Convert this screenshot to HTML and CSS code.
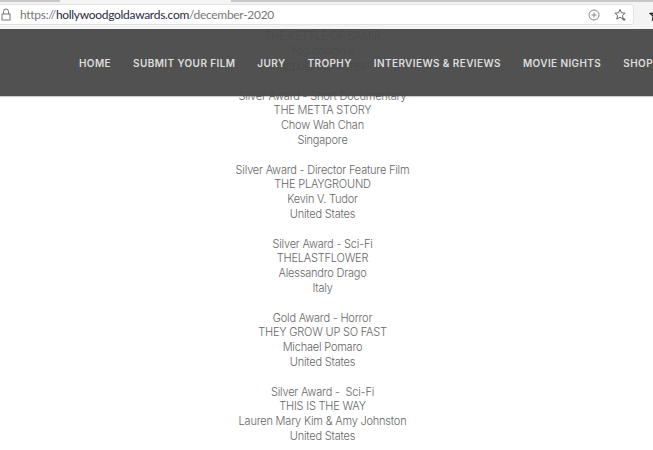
FILE: index.html
```html
<!DOCTYPE html>
<html lang="en">
<head>
<meta charset="utf-8">
<title>December 2020</title>
<link rel="stylesheet" href="styles.css">
</head>
<body>
<div class="chrome">
  <div class="tabs"><span class="tab tab-a"></span><span class="tab tab-b"></span></div>
  <div class="toolbar">
    <div class="omnibox">
      <svg class="lock" width="10" height="13" viewBox="0 0 10 13"><path d="M2.500 6V3.500a2.500 2.500 0 0 1 5 0V6" fill="none" stroke="#777"/><rect x="1" y="6" width="8" height="6" fill="none" stroke="#777"/></svg>
      <span class="url">https://<b>hollywoodgoldawards.com</b>/december-2020</span>
      <svg class="plus" width="12" height="12" viewBox="0 0 12 12"><circle cx="6" cy="6" r="5" fill="none" stroke="#888"/><path d="M6 3.500v5M3.500 6h5" stroke="#888"/></svg>
      <svg class="star" width="14" height="14" viewBox="0 0 14 14"><path d="M7 1.500l1.500 3.300 3.600.4-2.700 2.400.8 3.500L7 9.300l-3.200 1.800.8-3.500-2.700-2.400 3.600-.4z" fill="none" stroke="#666"/><path d="M11 10v3M9.500 11.500h3" stroke="#666"/></svg>
    </div>
    <svg class="star-out" width="14" height="14" viewBox="0 0 14 14"><path d="M7 1.500l1.700 3.600 3.800.5-2.800 2.600.7 3.800L7 10.100 3.600 12l.7-3.800L1.500 5.600l3.800-.5z" fill="none" stroke="#222" stroke-width="1.400"/></svg>
  </div>
</div>
<div class="page">
  <header class="nav">
    <a>HOME</a><a>SUBMIT YOUR FILM</a><a>JURY</a><a>TROPHY</a><a>INTERVIEWS &amp; REVIEWS</a><a>MOVIE NIGHTS</a><a>SHOP</a>
  </header>
  <main class="list">
    <p>THE KETTLE OF SAMIR<br>Yoo dongkuk<br>Republic of Korea</p>
    <p>Silver Award - Short Documentary<br>THE METTA STORY<br>Chow Wah Chan<br>Singapore</p>
    <p>Silver Award - Director Feature Film<br>THE PLAYGROUND<br>Kevin V. Tudor<br>United States</p>
    <p>Silver Award - Sci-Fi<br>THELASTFLOWER<br>Alessandro Drago<br>Italy</p>
    <p>Gold Award - Horror<br>THEY GROW UP SO FAST<br>Michael Pomaro<br>United States</p>
    <p>Silver Award -&nbsp; Sci-Fi<br>THIS IS THE WAY<br>Lauren Mary Kim &amp; Amy Johnston<br>United States</p>
  </main>
</div>
</body>
</html>
```
FILE: styles.css
```css
* { box-sizing: border-box; }
html, body { margin: 0; height: 100%; overflow: hidden; background: #fff; }
body { font-family: Inter, "Liberation Sans", sans-serif; width: 653px; height: 450px; }
.chrome { height: 29px; background: #f4f4f4; overflow: hidden; }
.tabs { height: 4px; display: flex; background: #f4f4f4; }
.tab { height: 2px; background: #c8c8c8; }
.tab-a { width: 60px; }
.tab-b { flex: 1; margin-left: 171px; }
.toolbar { display: flex; align-items: center; height: 21px; margin-left: -4px; }
.omnibox { width: 638px; flex: none; display: flex; align-items: center; height: 21px; margin-right: 15px; background: #fff; border: 1px solid #e2e2e2; border-radius: 3px; padding-left: 4px; }
.lock { flex: none; margin-right: 9px; }
.url { font-family: Lato, sans-serif; font-size: 12px; letter-spacing: -.3px; color: #777; flex: 1; }
.url b { font-weight: 400; color: #1f2a44; }
.plus { margin-right: 13px; }
.star { margin-right: 6px; }
.star-out { flex: none; }
.page { position: relative; }
.nav { position: absolute; top: 0; left: 0; width: 100%; height: 67px; background: rgba(72,72,72,.95); box-shadow: 0 1px 1px rgba(0,0,0,.2); display: flex; align-items: center; gap: 22px; padding-left: 79px; white-space: nowrap; }
.nav a { font-size: 10px; font-weight: 600; letter-spacing: .4px; color: #ddd; }
.list { text-align: center; font-weight: 300; font-size: 11px; letter-spacing: -.2px; line-height: 14.8px; color: #666; width: 645px; padding-top: .4px; }
.list p { margin: 0 0 14.8px; }
```
